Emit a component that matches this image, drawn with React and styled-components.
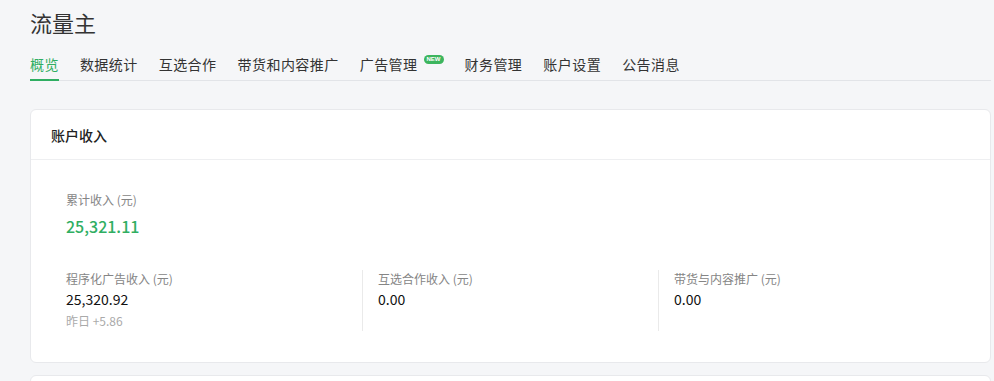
import React from 'react'
import styled, { createGlobalStyle } from 'styled-components'

const GlobalStyle = createGlobalStyle`
  html, body {
    margin: 0;
    padding: 0;
    background: #f5f6f8;
  }
  body {
    font-family: "Noto Sans CJK SC", "Noto Sans", sans-serif;
    color: #333;
  }
`

const tabs = [
  { label: '概览', active: true },
  { label: '数据统计' },
  { label: '互选合作' },
  { label: '带货和内容推广' },
  { label: '广告管理', isNew: true },
  { label: '财务管理' },
  { label: '账户设置' },
  { label: '公告消息' },
]

const stats = [
  { label: '程序化广告收入 (元)', value: '25,320.92', sub: '昨日 +5.86' },
  { label: '互选合作收入 (元)', value: '0.00' },
  { label: '带货与内容推广 (元)', value: '0.00' },
]

const App = () => {
  return (
    <Page>
      <GlobalStyle />
      <Title>流量主</Title>
      <TabBar>
        {tabs.map((t) => (
          <Tab key={t.label} active={t.active}>
            {t.label}
            {t.isNew && <NewBadge>NEW</NewBadge>}
          </Tab>
        ))}
      </TabBar>

      <Card>
        <CardHeader>账户收入</CardHeader>
        <CardBody>
          <Total>
            <Label>累计收入 (元)</Label>
            <TotalValue>25,321.11</TotalValue>
          </Total>
          <StatRow>
            {stats.map((s) => (
              <Stat key={s.label}>
                <Label>{s.label}</Label>
                <StatValue>{s.value}</StatValue>
                {s.sub && <SubText>{s.sub}</SubText>}
              </Stat>
            ))}
          </StatRow>
        </CardBody>
      </Card>

      <NextCard />
    </Page>
  )
}

const Page = styled.div`
  padding: 7px 3px 0 30px;
  height: 381px;
  box-sizing: border-box;
  overflow: hidden;
`

const Title = styled.h1`
  margin: 0;
  font-size: 22px;
  font-weight: 400;
  line-height: 30px;
  color: #333;
`

const TabBar = styled.div`
  display: flex;
  align-items: flex-end;
  gap: 21px;
  margin-top: 17px;
  border-bottom: 1px solid #e2e4e8;
`

const Tab = styled.div`
  position: relative;
  display: flex;
  align-items: flex-start;
  font-size: 14px;
  letter-spacing: 0.45px;
  line-height: 20px;
  padding-bottom: 5px;
  color: ${(p) => (p.active ? '#2fae62' : '#333')};
  border-bottom: 2px solid ${(p) => (p.active ? '#2fae62' : 'transparent')};
  margin-bottom: -1px;
`

const NewBadge = styled.span`
  margin-left: 6px;
  margin-top: 1px;
  height: 9px;
  padding: 0 3px;
  border-radius: 5px;
  background: #3cb55e;
  color: #fff;
  font-family: "Liberation Sans", sans-serif;
  font-size: 6px;
  font-weight: 700;
  line-height: 9px;
  letter-spacing: 0;
`

const Card = styled.div`
  margin-top: 28px;
  background: #fff;
  border: 1px solid #e8e9ec;
  border-radius: 6px;
`

const CardHeader = styled.div`
  height: 49px;
  display: flex;
  align-items: center;
  padding-left: 20px;
  font-size: 14px;
  font-weight: 500;
  color: #222;
  border-bottom: 1px solid #eeeff1;
`

const CardBody = styled.div`
  padding: 31px 35px 31px;
`

const Total = styled.div`
  display: flex;
  flex-direction: column;
  gap: 5px;
`

const Label = styled.div`
  font-size: 12px;
  line-height: 18px;
  color: #858585;
`

const TotalValue = styled.div`
  font-size: 16px;
  font-weight: 500;
  line-height: 24px;
  color: #2fae62;
`

const StatRow = styled.div`
  display: grid;
  grid-template-columns: repeat(3, 296px);
  margin-top: 32px;
  height: 61px;
`

const Stat = styled.div`
  display: flex;
  flex-direction: column;
  padding-left: 15px;
  border-left: 1px solid #eaeaea;

  &:first-child {
    padding-left: 0;
    border-left: none;
  }
`

const StatValue = styled.div`
  margin-top: 1px;
  font-size: 14px;
  font-weight: 400;
  line-height: 20px;
  color: #111;
`

const SubText = styled.div`
  margin-top: 3px;
  font-size: 12px;
  line-height: 18px;
  color: #aaa;
`

const NextCard = styled.div`
  margin-top: 12px;
  height: 40px;
  background: #fff;
  border: 1px solid #e8e9ec;
  border-radius: 6px;
`

export default App
